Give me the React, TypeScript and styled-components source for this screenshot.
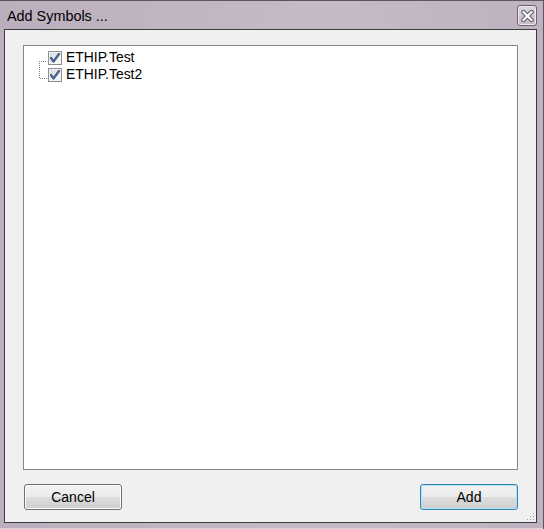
import React from "react";
import styled, { createGlobalStyle } from "styled-components";

const Global = createGlobalStyle`
  html, body { margin: 0; padding: 0; background: #ffffff; }
  body { font-family: "Liberation Sans", Arial, sans-serif; }
`;

const Window = styled.div`
  box-sizing: border-box;
  width: 544px;
  height: 529px;
  display: flex;
  flex-direction: column;
  padding: 0 6px 6px 4px;
  background: linear-gradient(to right, #bcafbd 0%, #c6bac6 60%, #bfb2c0 100%);
  border-top: 1px solid #5a5560;
  border-right: 1px solid #5a5560;
  box-shadow: inset 0 -1px 0 #dcd6dc;
`;

const TitleBar = styled.div`
  height: 28px;
  display: flex;
  align-items: center;
  justify-content: space-between;
  padding: 2px 0 0 3px;
  box-sizing: border-box;
`;

const Title = styled.span`
  font-family: "Liberation Sans", Arial, sans-serif;
  font-size: 14.4px;
  color: #000;
`;

const CloseButton = styled.div`
  box-sizing: border-box;
  width: 20px;
  height: 21px;
  margin-top: -1px;
  border: 1px solid #6b6470;
  border-radius: 3px;
  background: linear-gradient(#ddd6dd, #c4bbc5);
  box-shadow: inset 0 0 0 1px #ece8ec;
  display: flex;
  align-items: center;
  justify-content: center;
`;

const Client = styled.div`
  flex: 1;
  display: flex;
  flex-direction: column;
  border: 1px solid #3a3a3f;
  background: #f0f0f0;
  padding: 15px 18px 12px 18px;
  position: relative;
`;

const ListBox = styled.div`
  height: 425px;
  box-sizing: border-box;
  border: 1px solid #828790;
  background: #ffffff;
  padding: 3px 0 0 0;
  position: relative;
`;

const Tree = styled.div`
  position: relative;
  padding-left: 24px;
`;

const Row = styled.div`
  height: 17px;
  display: flex;
  align-items: center;
  gap: 4px;
`;

const Label = styled.span`
  font-family: "Liberation Sans", Arial, sans-serif;
  font-size: 13.9px;
  color: #000;
  line-height: 17px;
`;

const Box = styled.span`
  box-sizing: border-box;
  width: 14px;
  height: 14px;
  border: 1px solid #8e8f8f;
  background: linear-gradient(135deg, #d8d8d8, #fdfdfd);
  box-shadow: inset 0 0 0 1px #f4f4f4;
  display: flex;
  align-items: center;
  justify-content: center;
`;

const Lines = styled.svg`
  position: absolute;
  left: 14px;
  top: 11px;
`;

const Footer = styled.div`
  margin-top: 14px;
  display: flex;
  justify-content: space-between;
  padding-left: 1px;
`;

const Button = styled.button<{ $default?: boolean }>`
  box-sizing: border-box;
  width: 98px;
  height: 26px;
  border-radius: 3px;
  border: 1px solid ${(p) => (p.$default ? "#3c7fb1" : "#707070")};
  background: linear-gradient(#f2f2f2 0%, #ebebeb 50%, #dddddd 51%, #cfcfcf 100%);
  box-shadow: inset 0 0 0 1px ${(p) => (p.$default ? "#a9e4f7" : "#fcfcfc")};
  font-family: "Liberation Sans", Arial, sans-serif;
  font-size: 14px;
  color: #000;
  padding: 0;
`;

const Grip = styled.svg`
  position: absolute;
  right: 1px;
  bottom: 1px;
`;

function Check() {
  return (
    <svg width="10" height="10" viewBox="0 0 10 10">
      <path
        d="M1 5 L3.6 8.4 L9 1"
        fill="none"
        stroke="#4a5f92"
        strokeWidth="2.4"
        strokeLinecap="round"
        strokeLinejoin="round"
      />
    </svg>
  );
}

export default function App() {
  return (
    <>
      <Global />
      <Window>
        <TitleBar>
          <Title>Add Symbols ...</Title>
          <CloseButton>
            <svg width="13" height="12" viewBox="0 0 13 12">
              <path
                d="M2.5 2 L10.5 10 M10.5 2 L2.5 10"
                stroke="#5d5862"
                strokeWidth="4.4"
                strokeLinecap="round"
              />
              <path
                d="M2.5 2 L10.5 10 M10.5 2 L2.5 10"
                stroke="#ffffff"
                strokeWidth="2.4"
                strokeLinecap="round"
              />
            </svg>
          </CloseButton>
        </TitleBar>
        <Client>
          <ListBox>
            <Tree>
              <Lines width="12" height="20">
                <path
                  d="M1 1 H9 M1 1 V18 H9"
                  fill="none"
                  stroke="#808080"
                  strokeWidth="1"
                  strokeDasharray="1 1"
                  shapeRendering="crispEdges"
                />
              </Lines>
              <Row>
                <Box>
                  <Check />
                </Box>
                <Label>ETHIP.Test</Label>
              </Row>
              <Row>
                <Box>
                  <Check />
                </Box>
                <Label>ETHIP.Test2</Label>
              </Row>
            </Tree>
          </ListBox>
          <Footer>
            <Button>Cancel</Button>
            <Button $default>Add</Button>
          </Footer>
          <Grip width="9" height="9" viewBox="0 0 9 9">
            <g fill="#a0a0a0">
              <rect x="7" y="1" width="1" height="1" />
              <rect x="4" y="4" width="1" height="1" />
              <rect x="7" y="4" width="1" height="1" />
              <rect x="1" y="7" width="1" height="1" />
              <rect x="4" y="7" width="1" height="1" />
              <rect x="7" y="7" width="1" height="1" />
            </g>
          </Grip>
        </Client>
      </Window>
    </>
  );
}
